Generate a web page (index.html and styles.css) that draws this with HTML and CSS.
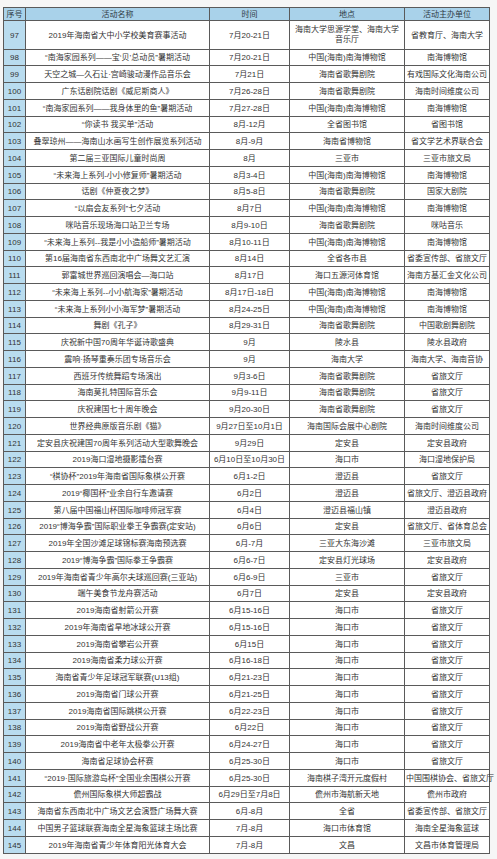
FILE: index.html
```html
<!DOCTYPE html>
<html lang="zh-CN">
<head>
<meta charset="utf-8">
<title>活动表</title>
<link rel="stylesheet" href="styles.css">
</head>
<body>
<table class="events">
<colgroup>
<col class="c-no"><col class="c-name"><col class="c-time"><col class="c-place"><col class="c-org">
</colgroup>
<thead>
<tr><th class="no">序号</th><th>活动名称</th><th>时间</th><th>地点</th><th>活动主办单位</th></tr>
</thead>
<tbody>
<tr class="tall"><td class="no">97</td><td>2019年海南省大中小学校美育赛事活动</td><td>7月20-21日</td><td class="wrap">海南大学思源学堂、海南大学音乐厅</td><td>省教育厅、海南大学</td></tr>
<tr><td class="no">98</td><td>“南海家园系列——宝‘贝’总动员”暑期活动</td><td>7月20-21日</td><td>中国(海南)南海博物馆</td><td>南海博物馆</td></tr>
<tr><td class="no">99</td><td>天空之城—久石让·宫崎骏动漫作品音乐会</td><td>7月21日</td><td>海南省歌舞剧院</td><td>有戏国际文化海南公司</td></tr>
<tr><td class="no">100</td><td>广东话剧院话剧《威尼斯商人》</td><td>7月26-28日</td><td>海南省歌舞剧院</td><td>海南时间维度公司</td></tr>
<tr><td class="no">101</td><td>“南海家园系列——我身体里的鱼”暑期活动</td><td>7月27-28日</td><td>中国(海南)南海博物馆</td><td>南海博物馆</td></tr>
<tr><td class="no">102</td><td>“你读书 我买单”活动</td><td>8月-12月</td><td>全省图书馆</td><td>省图书馆</td></tr>
<tr><td class="no">103</td><td>叠翠琼州——海南山水画写生创作展览系列活动</td><td>8月-9月</td><td>海南省博物馆</td><td>省文学艺术界联合会</td></tr>
<tr><td class="no">104</td><td>第二届三亚国际儿童时尚周</td><td>8月</td><td>三亚市</td><td>三亚市旅文局</td></tr>
<tr><td class="no">105</td><td>“未来海上系列-小小修复师”暑期活动</td><td>8月3-4日</td><td>中国(海南)南海博物馆</td><td>南海博物馆</td></tr>
<tr><td class="no">106</td><td>话剧《仲夏夜之梦》</td><td>8月5-8日</td><td>海南省歌舞剧院</td><td>国家大剧院</td></tr>
<tr><td class="no">107</td><td>“以扇会友系列”七夕活动</td><td>8月7日</td><td>中国(海南)南海博物馆</td><td>南海博物馆</td></tr>
<tr><td class="no">108</td><td>咪咕音乐现场海口站卫兰专场</td><td>8月9-10日</td><td>海南省歌舞剧院</td><td>咪咕音乐</td></tr>
<tr><td class="no">109</td><td>“未来海上系列--我是小小造船师”暑期活动</td><td>8月10-11日</td><td>中国(海南)南海博物馆</td><td>南海博物馆</td></tr>
<tr><td class="no">110</td><td>第16届海南省东西南北中广场舞文艺汇演</td><td>8月14日</td><td>全省各市县</td><td>省委宣传部、省旅文厅</td></tr>
<tr><td class="no">111</td><td>郭富城世界巡回演唱会—海口站</td><td>8月17日</td><td>海口五源河体育馆</td><td>海南方基汇金文化公司</td></tr>
<tr><td class="no">112</td><td>“未来海上系列--小小航海家”暑期活动</td><td>8月17日-18日</td><td>中国(海南)南海博物馆</td><td>南海博物馆</td></tr>
<tr><td class="no">113</td><td>“未来海上系列小小海军梦”暑期活动</td><td>8月24-25日</td><td>中国(海南)南海博物馆</td><td>南海博物馆</td></tr>
<tr><td class="no">114</td><td>舞剧《孔子》</td><td>8月29-31日</td><td>海南省歌舞剧院</td><td>中国歌剧舞剧院</td></tr>
<tr><td class="no">115</td><td>庆祝新中国70周年华诞诗歌盛典</td><td>9月</td><td>陵水县</td><td>陵水县政府</td></tr>
<tr><td class="no">116</td><td>震响·扬琴重奏乐团专场音乐会</td><td>9月</td><td>海南大学</td><td>海南大学、海南音协</td></tr>
<tr><td class="no">117</td><td>西班牙传统舞蹈专场演出</td><td>9月3-6日</td><td>海南省歌舞剧院</td><td>省旅文厅</td></tr>
<tr><td class="no">118</td><td>海南莫扎特国际音乐会</td><td>9月9-11日</td><td>海南省歌舞剧院</td><td>省旅文厅</td></tr>
<tr><td class="no">119</td><td>庆祝建国七十周年晚会</td><td>9月20-30日</td><td>海南省歌舞剧院</td><td>省旅文厅</td></tr>
<tr><td class="no">120</td><td>世界经典原版音乐剧《猫》</td><td>9月27日至10月1日</td><td>海南国际会展中心剧院</td><td>海南时间维度公司</td></tr>
<tr><td class="no">121</td><td>定安县庆祝建国70周年系列活动大型歌舞晚会</td><td>9月29日</td><td>定安县</td><td>定安县政府</td></tr>
<tr><td class="no">122</td><td>2019海口湿地摄影擂台赛</td><td>6月10日至10月30日</td><td>海口市</td><td>海口湿地保护局</td></tr>
<tr><td class="no">123</td><td>“棋协杯”2019年海南省国际象棋公开赛</td><td>6月1-2日</td><td>澄迈县</td><td>省旅文厅</td></tr>
<tr><td class="no">124</td><td>2019“椰国杯”业余自行车邀请赛</td><td>6月2日</td><td>澄迈县</td><td>省旅文厅、澄迈县政府</td></tr>
<tr><td class="no">125</td><td>第八届中国福山杯国际咖啡师冠军赛</td><td>6月4日</td><td>澄迈县福山镇</td><td>澄迈县政府</td></tr>
<tr><td class="no">126</td><td>2019“博海争霸”国际职业拳王争霸赛(定安站)</td><td>6月6日</td><td>定安县</td><td>省旅文厅、省体育总会</td></tr>
<tr><td class="no">127</td><td>2019年全国沙滩足球锦标赛海南预选赛</td><td>6月-7月</td><td>三亚大东海沙滩</td><td>三亚市旅文局</td></tr>
<tr><td class="no">128</td><td>2019“博海争霸”国际拳王争霸赛</td><td>6月6-7日</td><td>定安县灯光球场</td><td>定安县政府</td></tr>
<tr><td class="no">129</td><td>2019年海南省青少年高尔夫球巡回赛(三亚站)</td><td>6月6-9日</td><td>三亚市</td><td>省旅文厅</td></tr>
<tr><td class="no">130</td><td>端午美食节龙舟赛活动</td><td>6月7日</td><td>定安县</td><td>定安县政府</td></tr>
<tr><td class="no">131</td><td>2019海南省射箭公开赛</td><td>6月15-16日</td><td>海口市</td><td>省旅文厅</td></tr>
<tr><td class="no">132</td><td>2019年海南省旱地冰球公开赛</td><td>6月15-16日</td><td>海口市</td><td>省旅文厅</td></tr>
<tr><td class="no">133</td><td>2019海南省攀岩公开赛</td><td>6月15日</td><td>海口市</td><td>省旅文厅</td></tr>
<tr><td class="no">134</td><td>2019海南省柔力球公开赛</td><td>6月16-18日</td><td>海口市</td><td>省旅文厅</td></tr>
<tr><td class="no">135</td><td>海南省青少年足球冠军联赛(U13组)</td><td>6月21-23日</td><td>海口市</td><td>省旅文厅</td></tr>
<tr><td class="no">136</td><td>2019海南省门球公开赛</td><td>6月21-25日</td><td>海口市</td><td>省旅文厅</td></tr>
<tr><td class="no">137</td><td>2019海南省国际跳棋公开赛</td><td>6月22-23日</td><td>海口市</td><td>省旅文厅</td></tr>
<tr><td class="no">138</td><td>2019海南省野战公开赛</td><td>6月22日</td><td>海口市</td><td>省旅文厅</td></tr>
<tr><td class="no">139</td><td>2019海南省中老年太极拳公开赛</td><td>6月24-27日</td><td>海口市</td><td>省旅文厅</td></tr>
<tr><td class="no">140</td><td>海南省足球协会杯赛</td><td>6月25-30日</td><td>海口市</td><td>省旅文厅</td></tr>
<tr><td class="no">141</td><td>“2019·国际旅游岛杯”全国业余围棋公开赛</td><td>6月25-30日</td><td>海南棋子湾开元度假村</td><td>中国围棋协会、省旅文厅</td></tr>
<tr><td class="no">142</td><td>儋州国际象棋大师超霸战</td><td>6月29日至7月8日</td><td>儋州市海航新天地</td><td>儋州市政府</td></tr>
<tr><td class="no">143</td><td>海南省东西南北中广场文艺会演暨广场舞大赛</td><td>6月-8月</td><td>全省</td><td>省委宣传部、省旅文厅</td></tr>
<tr><td class="no">144</td><td>中国男子篮球联赛海南全星海象篮球主场比赛</td><td>7月-8月</td><td>海口市体育馆</td><td>海南全星海象篮球</td></tr>
<tr><td class="no">145</td><td>2019年海南省青少年体育阳光体育大会</td><td>7月-8月</td><td>文昌</td><td>文昌市体育管理局</td></tr>
</tbody>
</table>
</body>
</html>
```
FILE: styles.css
```css
html, body {
  margin: 0;
  padding: 0;
  background: #f6f6f6;
}
body {
  padding: 7px 0 0 3px;
  font-family: "Liberation Sans", "Noto Sans CJK SC", sans-serif;
  color: #333333;
}
.events {
  border-collapse: collapse;
  table-layout: fixed;
  width: 486px;
  background: #ffffff;
  font-size: 8px;
  line-height: 9px;
}
.c-no { width: 22px; }
.c-name { width: 184px; }
.c-time { width: 80px; }
.c-place { width: 115px; }
.c-org { width: 85px; }
.events th,
.events td {
  border: 1px solid #5a5a5a;
  padding: 0 1px;
  text-align: center;
  vertical-align: middle;
  white-space: nowrap;
  overflow: visible;
}
.events thead tr {
  height: 13px;
}
.events th {
  background: #a9d2ea;
  font-weight: normal;
  color: #2f3a44;
}
.events tbody tr {
  height: 17px;
}
.events tbody tr:nth-child(4n+2) {
  height: 16px;
}
.events tbody tr.tall {
  height: 29px;
}
.events td.no {
  background: #b9dcef;
}
.events td.wrap {
  white-space: normal;
  line-height: 10px;
  padding: 0 3px;
}
```
